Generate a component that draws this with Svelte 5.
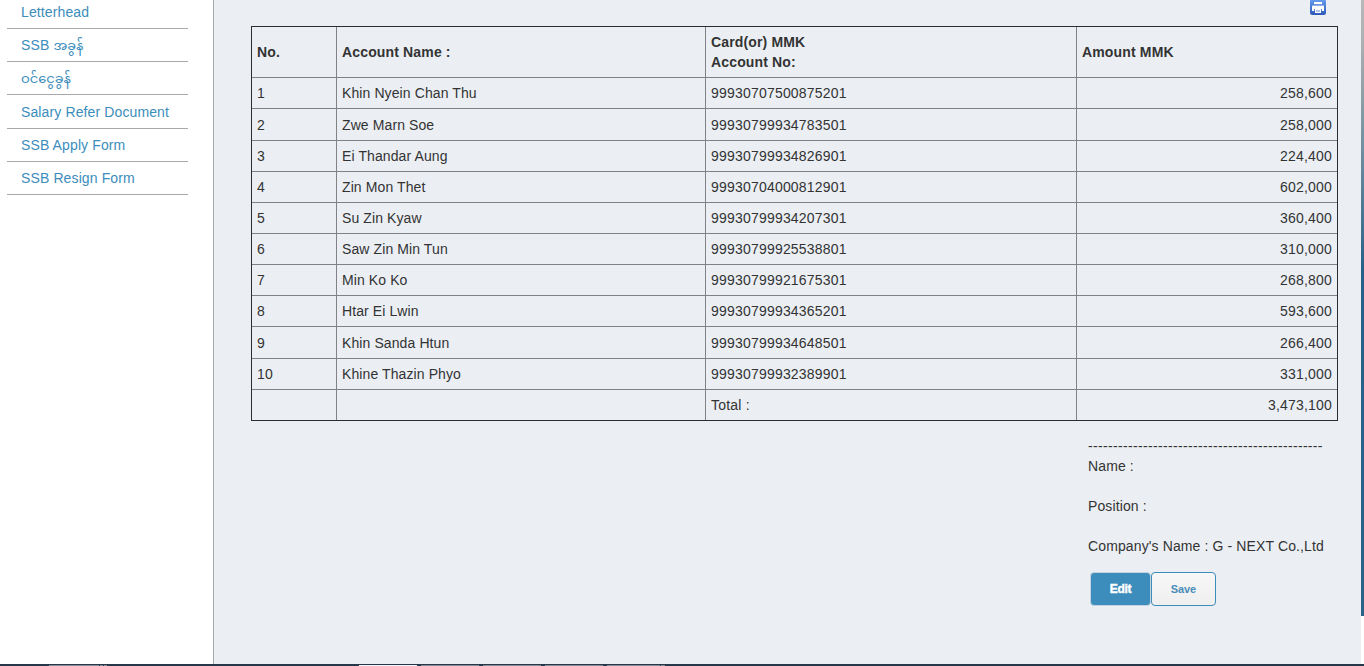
<script>
  const links = [
    { label: 'Letterhead', h: 29 },
    { label: 'SSB ', my: 'အခွန်', h: 33 },
    { label: '', my: 'ဝင်ငွေခွန်', h: 33 },
    { label: 'Salary Refer Document', h: 34 },
    { label: 'SSB Apply Form', h: 33 },
    { label: 'SSB Resign Form', h: 33 }
  ];
  const rows = [
    ['1', 'Khin Nyein Chan Thu', '99930707500875201', '258,600', 31],
    ['2', 'Zwe Marn Soe', '99930799934783501', '258,000', 32],
    ['3', 'Ei Thandar Aung', '99930799934826901', '224,400', 31],
    ['4', 'Zin Mon Thet', '99930704000812901', '602,000', 31],
    ['5', 'Su Zin Kyaw', '99930799934207301', '360,400', 31],
    ['6', 'Saw Zin Min Tun', '99930799925538801', '310,000', 31],
    ['7', 'Min Ko Ko', '99930799921675301', '268,800', 31],
    ['8', 'Htar Ei Lwin', '99930799934365201', '593,600', 31],
    ['9', 'Khin Sanda Htun', '99930799934648501', '266,400', 32],
    ['10', 'Khine Thazin Phyo', '99930799932389901', '331,000', 31],
    ['', '', 'Total :', '3,473,100', 30]
  ];
</script>

<div class="screen">
  <div class="body">
    <nav>
      {#each links as l}
        <a href="#top" style="height:{l.h}px"><span>{l.label}{#if l.my}<b lang="my">{l.my}</b>{/if}</span></a>
      {/each}
    </nav>
    <main>
      <div class="tools">
        <svg width="16" height="16" viewBox="0 0 16 16" aria-label="Print">
          <defs>
            <linearGradient id="blue" x1="0" y1="0" x2="0" y2="1">
              <stop offset="0" stop-color="#6a9ff0" />
              <stop offset="1" stop-color="#2c59b8" />
            </linearGradient>
          </defs>
          <rect width="16" height="16" rx="2.5" fill="url(#blue)" />
          <rect x="4" y="3" width="8" height="3" fill="#fff" />
          <path d="M3 6.500h10a1 1 0 0 1 1 1V12H2V7.500a1 1 0 0 1 1-1z" fill="#fff" />
          <rect x="4" y="5" width="8" height="1.500" fill="#6f9ae2" />
          <rect x="4" y="10" width="8" height="2" fill="#5a86d6" />
          <rect x="5" y="10" width="6" height="4" fill="#fff" />
          <rect x="6" y="11" width="4" height="2" fill="#b3c6ea" />
        </svg>
      </div>
      <table>
        <colgroup><col class="c1" /><col class="c2" /><col class="c3" /><col class="c4" /></colgroup>
        <thead>
          <tr>
            <th>No.</th>
            <th>Account Name :</th>
            <th>Card(or) MMK<br />Account No:</th>
            <th>Amount MMK</th>
          </tr>
        </thead>
        <tbody>
          {#each rows as r}
            <tr style="height:{r[4]}px">
              <td>{r[0]}</td>
              <td class="name">{r[1]}</td>
              <td>{r[2]}</td>
              <td class="amount">{r[3]}</td>
            </tr>
          {/each}
        </tbody>
      </table>
      <section class="sign">
        <div class="rule">-----------------------------------------------</div>
        <p>Name :</p>
        <p>Position :</p>
        <p>Company's Name : G - NEXT Co.,Ltd</p>
        <div class="buttons">
          <button class="edit">Edit</button>
          <button class="save">Save</button>
        </div>
      </section>
    </main>
    <aside></aside>
  </div>
  <footer>
    <i class="dim" style="margin-left:49px;width:50px"></i>
    <i class="dim" style="margin-left:1px;width:3px"></i>
    <i class="dim" style="margin-left:1px;width:3px"></i>
    <i class="lit" style="margin-left:252px;width:58px"></i>
    <i class="dim" style="margin-left:4px;width:58px"></i>
    <i class="dim" style="margin-left:4px;width:58px"></i>
    <i class="dim" style="margin-left:4px;width:58px"></i>
    <i class="dim" style="margin-left:4px;width:53px"></i>
    <i class="dim" style="margin-left:1px;width:4px"></i>
  </footer>
</div>

<style>
  :global(body) {
    margin: 0;
    background: #fff;
  }
  .screen {
    width: 1364px;
    height: 666px;
    overflow: hidden;
    display: flex;
    flex-direction: column;
    font: 14px/20px 'Liberation Sans', Arial, 'Noto Sans Myanmar', sans-serif;
    letter-spacing: 0.2px;
    color: #333;
  }
  .body {
    display: flex;
    height: 664px;
  }
  nav {
    width: 213px;
    border-right: 1px solid #a6a9ad;
    background: #fff;
    letter-spacing: 0.12px;
  }
  nav a {
    box-sizing: border-box;
    display: flex;
    align-items: flex-end;
    width: 181px;
    margin-left: 7px;
    padding: 0 0 6px 14px;
    border-bottom: 1px solid #a9a9a9;
    color: #3c8dbc;
    text-decoration: none;
    white-space: nowrap;
  }
  nav span {
    height: 20px;
  }
  nav b {
    font-weight: normal;
    font-size: 13px;
    line-height: 1;
    letter-spacing: 0;
  }
  main {
    box-sizing: border-box;
    width: 1147px;
    padding-left: 37px;
    background: #ebeff4;
  }
  .tools {
    height: 26px;
    padding-right: 35px;
    display: flex;
    justify-content: flex-end;
  }
  .tools svg {
    margin-top: -1px;
  }
  table {
    width: 1087px;
    table-layout: fixed;
    border-collapse: separate;
    border-spacing: 0;
    border: 1px solid #2a2d31;
  }
  .c1 {
    width: 85px;
  }
  .c2 {
    width: 369px;
  }
  .c3 {
    width: 371px;
  }
  .c4 {
    width: 260px;
  }
  th,
  td {
    box-sizing: border-box;
    padding: 0 5px;
    text-align: left;
    vertical-align: middle;
    border-right: 1px solid #808285;
    border-bottom: 1px solid #808285;
  }
  th {
    height: 51px;
    letter-spacing: 0.15px;
  }
  th:last-child,
  td:last-child {
    border-right: 0;
  }
  tbody tr:last-child td {
    border-bottom: 0;
  }
  td.name {
    letter-spacing: 0.1px;
  }
  td.amount {
    text-align: right;
  }
  .sign {
    margin: 15px 0 0 837px;
    white-space: nowrap;
    letter-spacing: 0.12px;
  }
  .rule {
    letter-spacing: 0.335px;
  }
  p {
    margin: 0 0 20px;
  }
  .buttons {
    display: flex;
    margin: -4px 0 0 2px;
  }
  button {
    box-sizing: border-box;
    height: 34px;
    padding: 0;
    border-radius: 4px;
    font: bold 11px 'Liberation Sans', Arial, sans-serif;
    letter-spacing: -0.1px;
  }
  .edit {
    width: 61px;
    border: 1px solid #c3d3df;
    background: #3c8dbc;
    color: #fff;
    font-size: 12px;
    letter-spacing: -0.3px;
    -webkit-text-stroke: 0.4px #fff;
  }
  .save {
    width: 65px;
    border: 1px solid #3c8dbc;
    background: linear-gradient(#f7f7f7, #efefef);
    color: #4a8db8;
  }
  aside {
    width: 3px;
    height: 616px;
    background: linear-gradient(#b8b8b8 0, #adb0b2 40px, #6f8f9f 150px, #286187 270px, #2a6388 100%);
  }
  footer {
    display: flex;
    align-items: flex-end;
    height: 2px;
    background: #26374a;
  }
  footer i {
    height: 1px;
    flex: none;
  }
  .dim {
    background: #868d96;
  }
  .lit {
    background: #f4f4f6;
  }
</style>
